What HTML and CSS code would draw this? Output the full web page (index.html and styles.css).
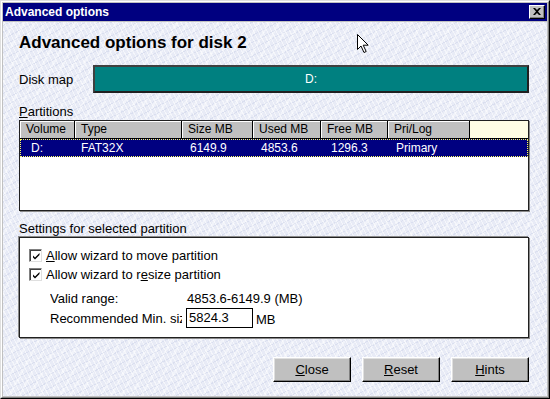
FILE: index.html
```html
<!DOCTYPE html>
<html>
<head>
<meta charset="utf-8">
<link rel="stylesheet" href="styles.css">
</head>
<body>
<div class="window">
  <div class="frame">
    <div class="titlebar">
      <span class="title">Advanced options</span>
      <span class="xbtn"><svg width="8" height="7" viewBox="0 0 8 7"><path d="M0 0h2l2 2 2-2h2L5 3.5 8 7H6L4 5 2 7H0l3-3.5z" fill="#000"/></svg></span>
    </div>
    <div class="client">
      <h1 class="heading">Advanced options for disk 2</h1>
      <div class="diskmap-row">
        <span class="diskmap-label">Disk map</span>
        <div class="diskmap"><span>D:</span></div>
      </div>
      <div class="section-label"><u>P</u>artitions</div>
      <div class="table">
        <div class="trow thead">
          <span class="th">Volume</span>
          <span class="th">Type</span>
          <span class="th">Size MB</span>
          <span class="th">Used MB</span>
          <span class="th">Free MB</span>
          <span class="th">Pri/Log</span>
          <span class="th filler"></span>
        </div>
        <div class="trow selected">
          <span class="td vol">D:</span>
          <span class="td">FAT32X</span>
          <span class="td">6149.9</span>
          <span class="td">4853.6</span>
          <span class="td free">1296.3</span>
          <span class="td">Primary</span>
          <span class="td"></span>
        </div>
      </div>
      <div class="section-label settings-label">Settings for selected partition</div>
      <div class="group">
        <label class="check-row">
          <span class="checkbox"><svg width="9" height="9" viewBox="0 0 9 9"><path d="M1 3.5l2 2 4.5-4.5v2L3 7.5 1 5.5z" fill="#000"/></svg></span>
          <span><u>A</u>llow wizard to move partition</span>
        </label>
        <label class="check-row">
          <span class="checkbox"><svg width="9" height="9" viewBox="0 0 9 9"><path d="M1 3.5l2 2 4.5-4.5v2L3 7.5 1 5.5z" fill="#000"/></svg></span>
          <span>Allow wizard to r<u>e</u>size partition</span>
        </label>
        <div class="info-row">
          <span class="info-label">Valid range:</span>
          <span class="info-value">4853.6-6149.9 (MB)</span>
        </div>
        <div class="info-row rec-row">
          <span class="info-label rec-label">Recommended Min. size</span>
          <span class="input">5824.3</span>
          <span class="unit">MB</span>
        </div>
      </div>
      <div class="buttons">
        <button class="btn"><u>C</u>lose</button>
        <button class="btn"><u>R</u>eset</button>
        <button class="btn"><u>H</u>ints</button>
      </div>
    </div>
  </div>
  <svg class="cursor" width="12" height="20" viewBox="0 0 12 20"><path d="M0.5 0.5v15l3.5-3.5 3 6.5 2.2-1-3-6.3h5z" fill="#fff" stroke="#000" stroke-width="1"/></svg>
</div>
</body>
</html>
```
FILE: styles.css
```css
* { box-sizing: border-box; }
body {
  margin: 0;
  font-family: "Liberation Sans", Arial, sans-serif;
  font-size: 13px;
  color: #000;
}
.window {
  position: relative;
  width: 550px;
  height: 399px;
  border: 1px solid;
  border-color: #dfdfdf #000 #000 #dfdfdf;
  background: #c0c0c0;
}
.frame {
  height: 100%;
  border: 1px solid;
  border-color: #fff #808080 #808080 #fff;
  padding: 1px;
  display: flex;
  flex-direction: column;
}
.titlebar {
  height: 18px;
  background: #000080;
  color: #fff;
  display: flex;
  align-items: center;
  justify-content: space-between;
  padding: 0 2px 0 2px;
  flex: none;
}
.title {
  font-weight: bold;
  font-size: 12px;
  line-height: 18px;
}
.xbtn {
  width: 16px;
  height: 14px;
  background: #c0c0c0;
  border: 1px solid;
  border-color: #fff #000 #000 #fff;
  box-shadow: inset -1px -1px #808080;
  display: flex;
  align-items: center;
  justify-content: center;
  padding-bottom: 1px;
}
.client {
  flex: 1;
  margin-top: 1px;
  padding: 11px 18px 0 16px;
  background-color: #e8ebf6;
  background-image:
    repeating-linear-gradient(62deg, rgba(255,255,255,0.55) 0 1px, transparent 1px 4px),
    repeating-linear-gradient(-28deg, rgba(170,180,215,0.22) 0 1px, transparent 1px 6px),
    repeating-linear-gradient(118deg, rgba(255,255,255,0.4) 0 2px, transparent 2px 9px);
  display: flex;
  flex-direction: column;
}
.heading {
  margin: 0;
  font-size: 17px;
  line-height: 20px;
  font-weight: bold;
}
.diskmap-row {
  display: flex;
  align-items: center;
  margin-top: 12px;
  height: 28px;
}
.diskmap-label {
  width: 74px;
  flex: none;
}
.diskmap {
  flex: 1;
  height: 28px;
  background: #008080;
  border: 2px solid;
  border-color: #404040 #202020 #202020 #404040;
  color: #fff;
  display: flex;
  align-items: center;
  justify-content: center;
  font-size: 12px;
}
.section-label {
  margin-top: 12px;
  height: 15px;
  line-height: 14px;
}
.table {
  height: 91px;
  background: #fff;
  border: 1px solid #202020;
  box-shadow: 1px 1px 0 #8a8a8a;
  font-size: 12px;
}
.trow {
  display: grid;
  grid-template-columns: 55px 107px 71px 68px 67px 82px 1fr;
}
.thead {
  height: 18px;
}
.th {
  background: #c0c0c0;
  border-right: 1px solid #000;
  border-bottom: 1px solid #000;
  box-shadow: inset 1px 1px #fff;
  padding-left: 6px;
  line-height: 17px;
  white-space: nowrap;
}
.th.filler {
  background: #fffde4;
  border-right: none;
  box-shadow: none;
}
.selected {
  height: 18px;
  background: #000080;
  color: #fff;
  outline: 1px dotted #ffff60;
  outline-offset: -1px;
}
.td {
  padding-left: 8px;
  line-height: 18px;
  white-space: nowrap;
}
.td.vol { padding-left: 11px; }
.td:nth-child(2) { padding-left: 6px; }
.td.free { padding-left: 10px; }
.settings-label {
  margin-top: 11px;
}
.group {
  height: 101px;
  background: #fff;
  border: 1px solid #202020;
  box-shadow: -1px -1px 0 #8a8a8a, 1px 1px 0 #8a8a8a;
  padding: 8px 0 0 9px;
  display: flex;
  flex-direction: column;
}
.check-row {
  display: flex;
  align-items: center;
  height: 19px;
  gap: 4px;
}
.checkbox {
  width: 13px;
  height: 13px;
  border: 1px solid;
  border-color: #808080 #dfdfdf #dfdfdf #808080;
  box-shadow: inset 1px 1px #404040;
  background: #fff;
  display: flex;
  align-items: center;
  justify-content: center;
  padding: 1px 0 0 1px;
}
.info-row {
  display: flex;
  align-items: center;
  margin-left: 21px;
  height: 17px;
}
.check-row + .check-row + .info-row { margin-top: 6px; }
.rec-row { height: 22px; }
.info-label {
  width: 136px;
  flex: none;
  overflow: hidden;
  white-space: nowrap;
}
.rec-label {
  width: 132px;
  margin-right: 4px;
}
.info-value { padding-left: 1px; }
.input {
  width: 67px;
  height: 20px;
  border: 1px solid #000;
  background: #fff;
  padding-left: 2px;
  line-height: 18px;
}
.unit {
  margin-left: 3px;
  padding-top: 2px;
}
.buttons {
  display: flex;
  justify-content: flex-end;
  gap: 11px;
  margin-top: 19px;
}
.btn {
  width: 78px;
  height: 25px;
  background: #c0c0c0;
  border: 1px solid;
  border-color: #fff #000 #000 #fff;
  box-shadow: inset -1px -1px #808080, inset 1px 1px #dfdfdf;
  font-family: "Liberation Sans", Arial, sans-serif;
  font-size: 13px;
  color: #000;
  padding: 0;
}
.cursor {
  position: absolute;
  left: 356px;
  top: 33px;
}
```
